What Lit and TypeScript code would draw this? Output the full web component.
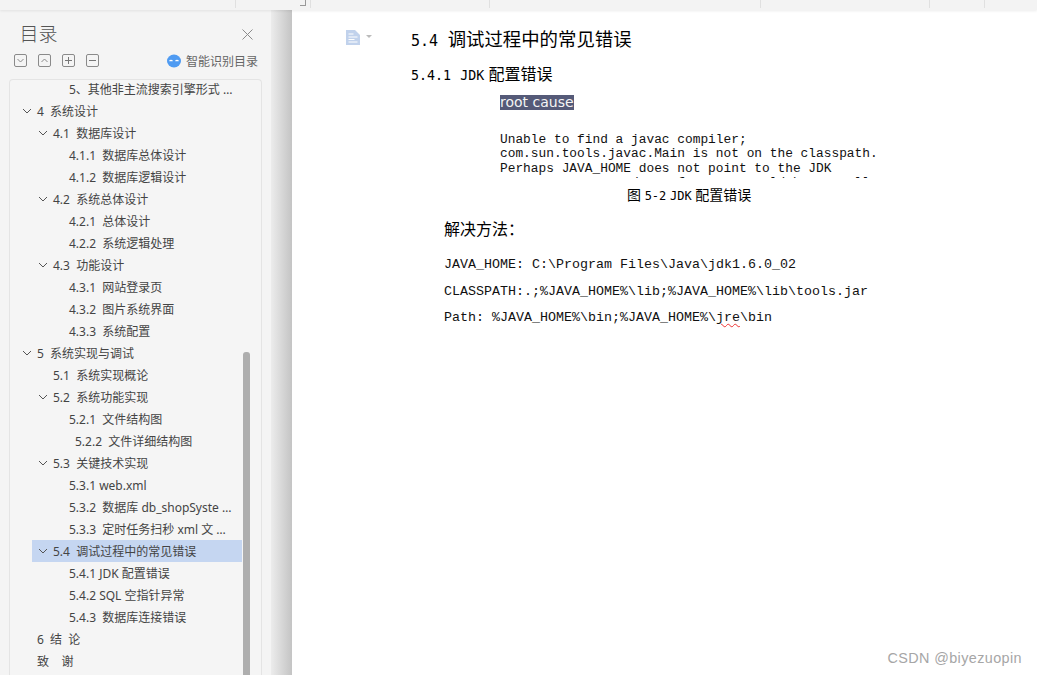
import { LitElement, html, css, svg } from "lit";
import { customElement } from "lit/decorators.js";

type Row = { t: string; l: 1 | 2 | 3; arrow?: boolean; active?: boolean; extra?: boolean };

const rows: Row[] = [
  { t: "5、其他非主流搜索引擎形式 …", l: 3 },
  { t: "4  系统设计", l: 1, arrow: true },
  { t: "4.1  数据库设计", l: 2, arrow: true },
  { t: "4.1.1  数据库总体设计", l: 3 },
  { t: "4.1.2  数据库逻辑设计", l: 3 },
  { t: "4.2  系统总体设计", l: 2, arrow: true },
  { t: "4.2.1  总体设计", l: 3 },
  { t: "4.2.2  系统逻辑处理", l: 3 },
  { t: "4.3  功能设计", l: 2, arrow: true },
  { t: "4.3.1  网站登录页", l: 3 },
  { t: "4.3.2  图片系统界面", l: 3 },
  { t: "4.3.3  系统配置", l: 3 },
  { t: "5  系统实现与调试", l: 1, arrow: true },
  { t: "5.1  系统实现概论", l: 2 },
  { t: "5.2  系统功能实现", l: 2, arrow: true },
  { t: "5.2.1  文件结构图", l: 3 },
  { t: "5.2.2  文件详细结构图", l: 3, extra: true },
  { t: "5.3  关键技术实现", l: 2, arrow: true },
  { t: "5.3.1 web.xml", l: 3 },
  { t: "5.3.2  数据库 db_shopSyste …", l: 3 },
  { t: "5.3.3  定时任务扫秒 xml 文 …", l: 3 },
  { t: "5.4  调试过程中的常见错误", l: 2, arrow: true, active: true },
  { t: "5.4.1 JDK 配置错误", l: 3 },
  { t: "5.4.2 SQL 空指针异常", l: 3 },
  { t: "5.4.3  数据库连接错误", l: 3 },
  { t: "6  结  论", l: 1 },
  { t: "致    谢", l: 1 },
];

const chevron = svg`<path d="M1 3l4 4 4-4" fill="none" stroke="#555" stroke-width="1"/>`;

@customElement("app-root")
export class AppRoot extends LitElement {
  static styles = css`
    :host { display: block; width: 1037px; height: 675px; overflow: hidden; background: #fff;
      font-family: "Noto Sans", "Noto Sans CJK SC", sans-serif; position: relative; }
    .app { display: grid; grid-template-columns: 271px 21px 1fr; grid-template-rows: 10px 1fr; height: 675px; }
    .ruler { grid-column: 1 / -1; background: #f3f3f3; display: flex; position: relative; z-index: 2;
      box-shadow: 0 1px 3px rgba(0,0,0,.08); }
    .tick { border-left: 1px solid #e0e0e0; height: 8px; }
    .t1 { margin-left: 235px; }
    .corner { margin-left: 64px; width: 5px; height: 5px; border-right: 1px solid #999; border-bottom: 1px solid #999; }
    .t2 { margin-left: 4px; }
    .t3 { margin-left: 178px; }
    .t4 { margin-left: 270px; }
    .t5 { margin-left: 168px; }
    .t6 { margin-left: 54px; }

    .side { background: #f4f4f4; display: flex; flex-direction: column; min-height: 0; overflow: hidden; }
    .head { display: flex; justify-content: space-between; align-items: center; padding: 13px 18px 0 19.5px; height: 23px; }
    .title { font-size: 19px; font-weight: 300; color: #555; line-height: 23px; }
    .close { display: block; }
    .tools { display: flex; align-items: center; padding: 8px 13px 0 14px; height: 13px; margin-bottom: 12px; }
    .tool { width: 13px; height: 13px; display: block; margin-right: 11px; }
    .ai { margin-left: auto; display: flex; align-items: center; gap: 5px; font-size: 12px; color: #666; white-space: nowrap; }
    .list { position: relative; margin-left: 9px; width: 253px; flex: 1; box-sizing: border-box; border: 1px solid #e4e4e4;
      border-bottom: none; border-radius: 4px 4px 0 0; overflow: hidden; background: #f5f5f5; }
    .rows { margin-top: -2px; }
    .row { display: flex; align-items: center; height: 22px; font-size: 12px; color: #444; box-sizing: border-box; padding-left: 6px;
      width: calc(232px - var(--x)); margin-left: var(--x); }
    .row.l1 { --x: 6px; }
    .row.l2 { --x: 22px; }
    .row.l3 { --x: 38px; }
    .row.active { background: #c5d6f1; }
    .arrow { width: 10px; height: 10px; flex: none; margin-right: 5px; }
    .spacer { width: 15px; flex: none; }
    .spacer.extra { width: 21px; }
    .txt { white-space: pre; min-width: 0; }
    .thumb { position: absolute; left: 233px; top: 272px; width: 7px; height: 330px; background: #aeaeae; border-radius: 3px 3px 0 0; }

    .gutter { background: linear-gradient(to right, #ececec, #c4c4c4); }

    .page { background: #fff; display: flex; padding: 20px 0 0 54px; color: #000; min-width: 0; }
    .icon { display: flex; gap: 6px; width: 65px; flex: none; align-items: flex-start; }
    .doc { display: block; }
    .content { display: flex; flex-direction: column; width: 560px; }
    h1, h2 { margin: 0; font-weight: 400; white-space: pre; }
    h1 { font-size: 18.4px; line-height: 18px; }
    h1 .n { font-family: "DejaVu Sans Mono", monospace; font-size: 15px; }
    h2 { font-size: 16px; line-height: 16px; margin-top: 16px; }
    .m16 { font-family: "DejaVu Sans Mono", monospace; font-size: 13.3px; }
    .m16.jdk { margin-left: 5px; }
    .shot { margin: 11px 0 0 89px; height: 83px; overflow: hidden; font-family: "Liberation Mono", monospace; font-size: 12.85px; line-height: 14.5px; color: #111; }
    .rc { display: inline-block; background: #555a78; color: #f4f4f4; font-family: "DejaVu Sans", sans-serif; font-size: 14px; line-height: 15px; height: 15px; }
    .shot pre { margin: 21px 0 0; font: inherit; }
    .cap { margin: 8px 0 0 216px; font-size: 14px; line-height: 18px; white-space: pre; }
    .cap .m { font-family: "DejaVu Sans Mono", monospace; font-size: 12px; }
    .sol { margin: 14px 0 0 33px; font-size: 16px; line-height: 20px; }
    .code { margin-left: 33px; padding-top: 13px; font-family: "Liberation Mono", monospace; font-size: 13.33px; color: #111; }
    .code div { height: 26.5px; line-height: 26.5px; white-space: pre; }
    .sq { text-decoration: underline wavy #e33 1px; text-underline-offset: 2px; }
    .mark { position: absolute; right: 15px; bottom: 9px; font-family: "Liberation Sans", sans-serif; font-size: 14.4px; letter-spacing: .4px; color: #a6a6a6; }
  `;

  private box(inner: unknown) {
    return html`<svg class="tool" viewBox="0 0 13 13"><rect x=".5" y=".5" width="12" height="12" rx="1.5" fill="none" stroke="#8a8a8a"/>${inner}</svg>`;
  }

  render() {
    return html`<div class="app">
      <div class="ruler">
        <i class="tick t1"></i><i class="corner"></i><i class="tick t2"></i><i class="tick t3"></i>
        <i class="tick t4"></i><i class="tick t5"></i><i class="tick t6"></i>
      </div>
      <aside class="side">
        <div class="head">
          <span class="title">目录</span>
          <svg class="close" width="11" height="11" viewBox="0 0 11 11"><path d="M.5.5l10 10M10.5.5l-10 10" stroke="#8a8a8a" stroke-width="1" fill="none"/></svg>
        </div>
        <div class="tools">
          ${this.box(svg`<path d="M3.5 5l3 3 3-3" fill="none" stroke="#8a8a8a"/>`)}
          ${this.box(svg`<path d="M3.5 8l3-3 3 3" fill="none" stroke="#8a8a8a"/>`)}
          ${this.box(svg`<path d="M3 6.5h7M6.5 3v7" fill="none" stroke="#777"/>`)}
          ${this.box(svg`<path d="M3 6.5h7" fill="none" stroke="#777"/>`)}
          <span class="ai">
            <svg width="14" height="14" viewBox="0 0 14 14"><ellipse cx="7" cy="7" rx="7" ry="6.5" fill="#4f9bf2"/><path d="M2.5 7.2q1.5-1.8 3 0M8.5 7.2q1.5-1.8 3 0" stroke="#fff" stroke-width="1.2" fill="none"/></svg>
            智能识别目录
          </span>
        </div>
        <div class="list">
          <div class="rows">
            ${rows.map(
              (r) => html`<div class="row l${r.l} ${r.active ? "active" : ""}">
                ${r.arrow
                  ? html`<svg class="arrow" viewBox="0 0 10 10">${chevron}</svg>`
                  : html`<span class="spacer ${r.extra ? "extra" : ""}"></span>`}
                <span class="txt">${r.t}</span>
              </div>`
            )}
          </div>
          <div class="thumb"></div>
        </div>
      </aside>
      <div class="gutter"></div>
      <main class="page">
        <div class="icon">
          <svg class="doc" width="14" height="15" viewBox="0 0 14 15">
            <path d="M0 0h9l5 5v10H0z" fill="#c1d2ec"/>
            <path d="M2.5 4h5M2.5 7h9M2.5 9.5h6M2.5 12h9" stroke="#fff" stroke-width="1" fill="none"/>
          </svg>
          <svg width="6" height="14" viewBox="0 0 6 14"><path d="M0 5h6l-3 3z" fill="#bbb"/></svg>
        </div>
        <div class="content">
          <h1><span class="n">5.4</span>  调试过程中的常见错误</h1>
          <h2><span class="m16">5.4.1</span> <span class="m16 jdk">JDK</span> 配置错误</h2>
          <div class="shot">
            <span class="rc">root cause</span>
            <pre>Unable to find a javac compiler;
com.sun.tools.javac.Main is not on the classpath.
Perhaps JAVA_HOME does not point to the JDK
                 d     f           ld b       ll</pre>
          </div>
          <div class="cap">图 <span class="m">5-2</span> <span class="m">JDK</span> 配置错误</div>
          <div class="sol">解决方法：</div>
          <div class="code">
            <div>JAVA_HOME: C:\\Program Files\\Java\\jdk1.6.0_02</div>
            <div>CLASSPATH:.;%JAVA_HOME%\\lib;%JAVA_HOME%\\lib\\tools.jar</div>
            <div>Path: %JAVA_HOME%\\bin;%JAVA_HOME%\\<span class="sq">jre</span>\\bin</div>
          </div>
        </div>
      </main>
    </div>
    <div class="mark">CSDN @biyezuopin</div>`;
  }
}
